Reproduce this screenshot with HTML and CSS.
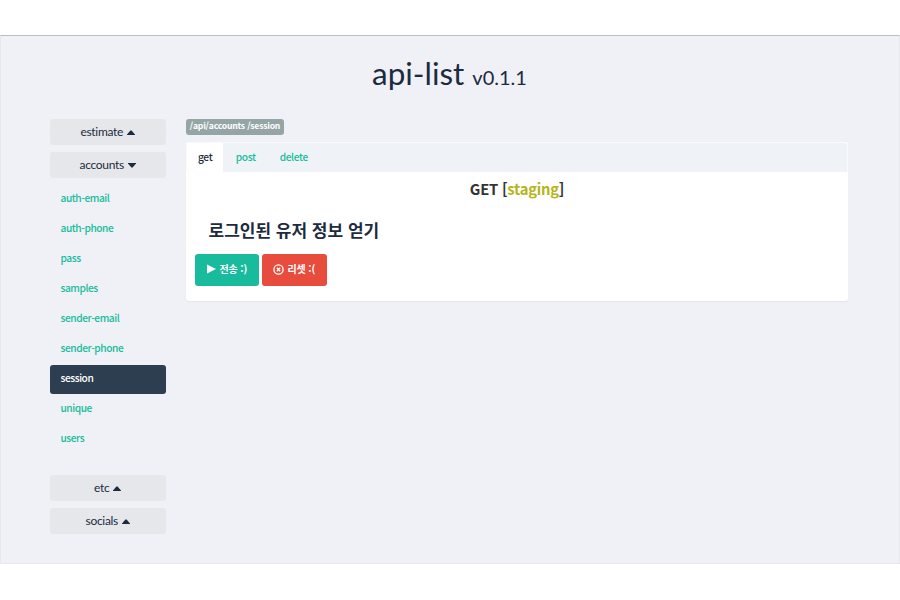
FILE: index.html
```html
<!DOCTYPE html>
<html lang="ko">
<head>
<meta charset="utf-8">
<title>api-list</title>
<link rel="stylesheet" href="styles.css">
</head>
<body>
<main class="app">
  <h1 class="title">api-list <small>v0.1.1</small></h1>
  <div class="layout">
    <aside class="sidebar">
      <button class="group">estimate <svg class="caret" viewBox="0 0 8 5"><path d="M0 5V4.4L3.4.5H4.6L8 4.4V5Z"/></svg></button>
      <button class="group">accounts <svg class="caret" viewBox="0 0 8 5"><path d="M0 0H8V.6L4.6 4.5H3.4L0 .6Z"/></svg></button>
      <nav class="links">
        <a class="link">auth-email</a>
        <a class="link">auth-phone</a>
        <a class="link">pass</a>
        <a class="link">samples</a>
        <a class="link">sender-email</a>
        <a class="link">sender-phone</a>
        <a class="link active">session</a>
        <a class="link">unique</a>
        <a class="link">users</a>
      </nav>
      <button class="group">etc <svg class="caret" viewBox="0 0 8 5"><path d="M0 5V4.4L3.4.5H4.6L8 4.4V5Z"/></svg></button>
      <button class="group">socials <svg class="caret" viewBox="0 0 8 5"><path d="M0 5V4.4L3.4.5H4.6L8 4.4V5Z"/></svg></button>
    </aside>
    <section class="content">
      <span class="badge">/api/accounts /session</span>
      <div class="card">
        <div class="tabs">
          <a class="tab current">get</a>
          <a class="tab">post</a>
          <a class="tab">delete</a>
        </div>
        <div class="panel">
          <h2 class="method">GET [<span class="env">staging</span>]</h2>
          <h3 class="description">로그인된 유저 정보 얻기</h3>
          <div class="actions">
            <button class="action send"><svg class="play" viewBox="0 0 9 10"><path d="M0 .5 9 5 0 9.5Z"/></svg><span>전송 :)</span></button>
            <button class="action reset"><svg class="cancel" viewBox="0 0 11 11"><circle cx="5.5" cy="5.5" r="4.6"/><path d="m3.8 3.8 3.4 3.4M7.2 3.8 3.8 7.2"/></svg><span>리셋 :(</span></button>
          </div>
        </div>
      </div>
    </section>
  </div>
</main>
</body>
</html>
```
FILE: styles.css
```css
* { box-sizing: border-box; }
body {
  margin: 0;
  padding-top: 35px;
  background: #fff;
  color: #1c2b40;
  font-family: "Noto Sans CJK KR", sans-serif;
}
.app {
  height: 529px;
  background: #eff1f6;
  border: 1px solid #e7e8ec;
  border-top-color: #bcbdbf;
}
.title {
  margin: 17px 0 0;
  height: 40px;
  padding-right: 1px;
  font: 400 31.4px/40px Lato, sans-serif;
  text-align: center;
}
.title small { font-size: 20px; }
.layout {
  display: flex;
  gap: 20.5px;
  margin: 26px 0 0 49px;
}
.sidebar { width: 115.5px; }
.group {
  display: flex;
  align-items: center;
  justify-content: center;
  gap: 4px;
  width: 100%;
  height: 26px;
  margin-bottom: 7px;
  padding: 0;
  border: 0;
  border-radius: 3px;
  background: #e6e7eb;
  color: #1c2b40;
  font: 400 12px/26px Lato, sans-serif;
  letter-spacing: -.3px;
}
.caret {
  width: 8px;
  height: 5px;
  margin-top: 1px;
  fill: currentColor;
}
.links {
  display: flex;
  flex-direction: column;
  gap: 1px;
  margin-bottom: 21px;
}
.link {
  height: 29px;
  padding-left: 10.5px;
  border-radius: 3px;
  color: #18bc9c;
  font-size: 10.2px;
  font-weight: 500;
  letter-spacing: -.45px;
  line-height: 25px;
}
.link.active {
  background: #2c3e50;
  color: #fff;
}
.content { width: 662px; }
.badge {
  display: block;
  width: 98px;
  height: 16px;
  border-radius: 3px;
  background: #95a5a6;
  color: #fff;
  font-size: 8.6px;
  font-weight: 700;
  letter-spacing: -.2px;
  line-height: 12px;
  text-align: center;
  white-space: nowrap;
}
.card {
  height: 159px;
  margin-top: 7px;
  border-radius: 3px;
  background: #fff;
  box-shadow: 0 1px 1px #e5e7eb;
}
.tabs {
  display: flex;
  height: 30px;
  border: 1px solid #f8fafc;
  border-bottom: 0;
  border-radius: 3px 3px 0 0;
  background: #eff3f8;
}
.tab {
  padding: 0 11px 0 13px;
  color: #18bc9c;
  font-size: 10.2px;
  font-weight: 500;
  letter-spacing: -.37px;
  line-height: 27px;
}
.tab.current {
  background: #fff;
  color: #1c2b40;
  padding: 0 10.5px 0 11px;
}
.panel { padding: 5px 8.5px; }
.method {
  margin: 0;
  color: #333;
  font-size: 14.8px;
  font-weight: 700;
  letter-spacing: -.25px;
  line-height: 23px;
  text-align: center;
}
.env { color: #b5b51c; }
.description {
  margin: 17px 0 0 14px;
  font-size: 17px;
  font-weight: 700;
  line-height: 26px;
}
.actions {
  display: flex;
  gap: 3px;
  margin-top: 11px;
}
.action {
  display: flex;
  align-items: center;
  justify-content: center;
  gap: 3px;
  width: 64.5px;
  height: 32px;
  padding: 0 0 2px 1px;
  border: 0;
  border-radius: 3px;
  color: #fff;
  font: 700 10px/20px "Noto Sans CJK KR", sans-serif;
  letter-spacing: -.1px;
}
.send { background: #18bc9c; }
.reset {
  background: #e74c3c;
  padding-left: 0;
}
.play {
  width: 9px;
  height: 10px;
  fill: currentColor;
}
.cancel {
  width: 11px;
  height: 11px;
  fill: none;
  stroke: currentColor;
  stroke-width: 1.3;
}
```
